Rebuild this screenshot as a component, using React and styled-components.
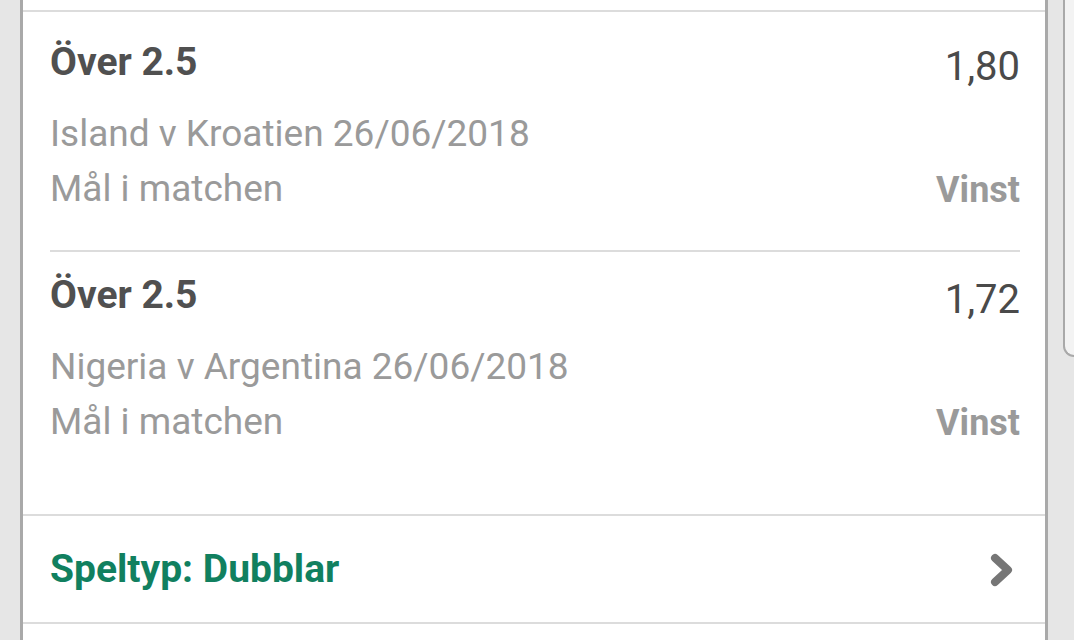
import styled, { createGlobalStyle } from 'styled-components';

const GlobalStyle = createGlobalStyle`
  html, body {
    margin: 0;
    padding: 0;
    background: #e6e6e6;
    font-family: Roboto, "Noto Sans", sans-serif;
    overflow: hidden;
  }
`;

const Page = styled.div`
  display: flex;
  align-items: flex-start;
  gap: 15px;
  height: 640px;
  padding-left: 20px;
`;

const Card = styled.div`
  flex: none;
  width: 1022px;
  height: 640px;
  background: #fff;
  border-left: 3px solid #a9a9a9;
  border-right: 3px solid #a9a9a9;
  padding-top: 10px;
  box-sizing: content-box;
`;

const Section = styled.div`
  border-top: 2px solid #dcdcdc;
`;

const Bet = styled.div`
  display: grid;
  grid-template-columns: 1fr auto;
  grid-template-rows: auto auto auto;
  padding: ${p => p.$top}px 25px ${p => p.$bottom}px 27px;
`;

const Title = styled.div`
  font-size: 39px;
  font-weight: 700;
  color: #505050;
  line-height: 42px;
`;

const Odds = styled.div`
  font-size: 40px;
  color: #4a4a4a;
  line-height: 42px;
  text-align: right;
  margin-top: 5px;
`;

const Info = styled.div`
  grid-column: 1;
  font-size: 37px;
  color: #9a9a9a;
  line-height: 42px;
  white-space: nowrap;
  margin-top: ${p => p.$mt || 0}px;
`;

const Result = styled.div`
  grid-column: 2;
  align-self: end;
  font-size: 36px;
  font-weight: 700;
  color: #9a9a9a;
  text-align: right;
  line-height: 42px;
  margin-bottom: -1px;
`;

const Divider = styled.div`
  height: 2px;
  background: #dcdcdc;
  margin: 0 25px 0 27px;
`;

const TypeRow = styled.div`
  display: flex;
  align-items: center;
  justify-content: space-between;
  height: 106px;
  padding: 0 29px 0 27px;
  border-top: 2px solid #dcdcdc;
  border-bottom: 2px solid #dcdcdc;
`;

const TypeLabel = styled.div`
  font-size: 39px;
  font-weight: 700;
  color: #11805f;
`;

const Side = styled.div`
  flex: 1;
  height: 355px;
  background: #f3f3f3;
  border-left: 2px solid #a9a9a9;
  border-bottom: 2px solid #a9a9a9;
  border-bottom-left-radius: 14px;
`;

const bets = [
  { title: 'Över 2.5', odds: '1,80', match: 'Island v Kroatien 26/06/2018', market: 'Mål i matchen', result: 'Vinst', top: 29, bottom: 40 },
  { title: 'Över 2.5', odds: '1,72', match: 'Nigeria v Argentina 26/06/2018', market: 'Mål i matchen', result: 'Vinst', top: 22, bottom: 71 },
];

const Chevron = () => (
  <svg width="26" height="36" viewBox="0 0 26 36">
    <path d="M5 7 L18 19 L5 31" fill="none" stroke="#767676" strokeWidth="8" strokeLinejoin="round" strokeLinecap="round" />
  </svg>
);

export default function App() {
  return (
    <>
      <GlobalStyle />
      <Page>
        <Card>
          <Section>
            {bets.map((b, i) => (
              <div key={i}>
                {i > 0 && <Divider />}
                <Bet $top={b.top} $bottom={b.bottom}>
                  <Title>{b.title}</Title>
                  <Odds>{b.odds}</Odds>
                  <Info $mt={25}>{b.match}</Info>
                  <Info $mt={13}>{b.market}</Info>
                  <Result>{b.result}</Result>
                </Bet>
              </div>
            ))}
          </Section>
          <TypeRow>
            <TypeLabel>Speltyp: Dubblar</TypeLabel>
            <Chevron />
          </TypeRow>
        </Card>
        <Side />
      </Page>
    </>
  );
}
